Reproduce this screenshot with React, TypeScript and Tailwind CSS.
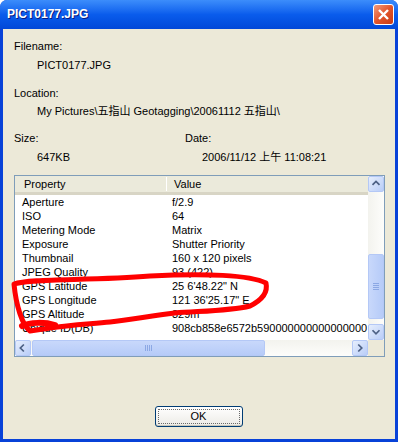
import React from 'react';

const rows: [string, string][] = [
  ['Aperture', 'f/2.9'],
  ['ISO', '64'],
  ['Metering Mode', 'Matrix'],
  ['Exposure', 'Shutter Priority'],
  ['Thumbnail', '160 x 120 pixels'],
  ['JPEG Quality', '93 (422)'],
  ['GPS Latitude', `25 6'48.22" N`],
  ['GPS Longitude', `121 36'25.17" E`],
  ['GPS Altitude', '329m'],
  ['Unique ID(DB)', '908cb858e6572b590000000000000000'],
];

const Arrow = ({ dir }: { dir: 'up' | 'down' | 'left' | 'right' }) => {
  const d = {
    up: 'M4 9 L8 5 L12 9',
    down: 'M4 6 L8 10 L12 6',
    left: 'M9 4 L5 8 L9 12',
    right: 'M6 4 L10 8 L6 12',
  }[dir];
  return (
    <svg width="16" height="16" viewBox="0 0 16 16">
      <path d={d} fill="none" stroke="#4D6185" strokeWidth="2" />
    </svg>
  );
};

const ScrollBtn = ({ dir }: { dir: 'up' | 'down' | 'left' | 'right' }) => (
  <div className="w-[16px] h-[16px] flex items-center justify-center rounded-[2px] border border-[#B4C8F6] bg-gradient-to-br from-[#E6EEFC] to-[#B9CDF8]">
    <Arrow dir={dir} />
  </div>
);

export default function App() {
  return (
    <div className="relative w-[398px] h-[442px] flex flex-col bg-[#0842D8] rounded-t-[7px] overflow-hidden font-['Liberation_Sans','Noto_Sans_CJK_TC',sans-serif] text-[11px] leading-[13px] text-black">
      {/* title bar */}
      <div className="h-[29px] shrink-0 flex items-center justify-between pl-[7px] pr-[4px] bg-gradient-to-b from-[#3C8DFB] via-[#0A5CEC] to-[#0248D8]">
        <span className="text-white font-bold text-[12px] [text-shadow:1px_1px_0_#0A1B80]">
          PICT0177.JPG
        </span>
        <div className="w-[21px] h-[21px] rounded-[3px] border border-white bg-gradient-to-br from-[#F09A7A] via-[#E2542A] to-[#C93A12] flex items-center justify-center">
          <svg width="13" height="13" viewBox="0 0 13 13">
            <path d="M2 2 L11 11 M11 2 L2 11" stroke="white" strokeWidth="2.4" />
          </svg>
        </div>
      </div>

      {/* body */}
      <div className="flex-1 mx-[3px] mb-[3px] bg-[#ECE9D8] flex flex-col pl-[11px] pr-[10px] pt-[11px]">
        <div>Filename:</div>
        <div className="mt-[6px] ml-[23px]">PICT0177.JPG</div>
        <div className="mt-[15px]">Location:</div>
        <div className="mt-[5px] ml-[23px]">My Pictures\五指山 Geotagging\20061112 五指山\</div>
        <div className="mt-[14px] flex">
          <div className="w-[171px]">
            <div>Size:</div>
            <div className="mt-[6px] ml-[23px]">647KB</div>
          </div>
          <div>
            <div>Date:</div>
            <div className="mt-[6px] ml-[17px]">2006/11/12 上午 11:08:21</div>
          </div>
        </div>

        {/* list view */}
        <div className="mt-[11px] h-[182px] border border-[#7F9DB9] bg-white flex flex-col">
          <div className="flex flex-1 min-h-0">
            <div className="flex-1 min-w-0 flex flex-col overflow-hidden">
              <div className="h-[19px] shrink-0 flex items-center bg-[#EBEADB] border-b-[3px] border-[#D8D5C5]">
                <div className="w-[151px] pl-[9px]">Property</div>
                <div className="w-[1px] h-[14px] bg-[#C7C5B2] border-r border-white" />
                <div className="pl-[7px]">Value</div>
              </div>
              <div className="flex-1 overflow-hidden">
                {rows.map(([k, v]) => (
                  <div key={k} className="h-[14px] flex items-center whitespace-nowrap">
                    <div className="w-[152px] shrink-0 pl-[7px]">{k}</div>
                    <div className="pl-[5px]">{v}</div>
                  </div>
                ))}
              </div>
            </div>
            {/* vertical scrollbar */}
            <div className="w-[16px] shrink-0 flex flex-col bg-gradient-to-r from-[#F3F3EE] to-[#FDFDFB]">
              <ScrollBtn dir="up" />
              <div className="flex-1 flex flex-col">
                <div className="h-[62px]" />
                <div className="h-[65px] rounded-[2px] border border-[#B4C8F6] bg-gradient-to-r from-[#C8D8FB] to-[#B6CBF8] flex flex-col items-center justify-center gap-[1px]">
                  <div className="w-[6px] h-[1px] bg-[#8CA8E4]" />
                  <div className="w-[6px] h-[1px] bg-[#8CA8E4]" />
                  <div className="w-[6px] h-[1px] bg-[#8CA8E4]" />
                  <div className="w-[6px] h-[1px] bg-[#8CA8E4]" />
                </div>
              </div>
              <ScrollBtn dir="down" />
            </div>
          </div>
          {/* horizontal scrollbar */}
          <div className="h-[16px] shrink-0 flex">
            <div className="flex-1 flex bg-gradient-to-b from-[#F3F3EE] to-[#FDFDFB]">
              <ScrollBtn dir="left" />
              <div className="w-[233px] ml-[1px] rounded-[2px] border border-[#B4C8F6] bg-gradient-to-b from-[#C8D8FB] to-[#B6CBF8] flex items-center justify-center gap-[1px]">
                <div className="w-[1px] h-[6px] bg-[#8CA8E4]" />
                <div className="w-[1px] h-[6px] bg-[#8CA8E4]" />
                <div className="w-[1px] h-[6px] bg-[#8CA8E4]" />
                <div className="w-[1px] h-[6px] bg-[#8CA8E4]" />
              </div>
              <div className="flex-1" />
              <ScrollBtn dir="right" />
            </div>
            <div className="w-[16px] bg-[#ECE9D8]" />
          </div>
        </div>

        <div className="mt-[49px] flex justify-center pr-[2px]">
          <button className="w-[88px] h-[21px] rounded-[3px] border border-[#003C74] bg-gradient-to-b from-[#FFFFFF] to-[#ECEBE6] p-[2px] shadow-[inset_0_-1px_0_#C9C7BA]">
            <div className="w-full h-full border border-dotted border-[#6B6B6B] flex items-center justify-center">
              OK
            </div>
          </button>
        </div>
      </div>

      {/* red annotation */}
      <svg className="absolute left-0 top-0 pointer-events-none" width="398" height="442" viewBox="0 0 398 442">
        <path
          d="M14 284 C 30 278, 90 281, 150 276 C 205 273, 250 275, 266 283 C 268 292, 262 300, 250 306 C 230 311, 200 311, 175 313 C 150 316, 130 320, 110 322 C 90 324, 70 325, 50 328 L 30 331 C 22 325, 16 305, 14 284 Z"
          fill="none"
          stroke="#FF0000"
          strokeWidth="5"
          strokeLinejoin="round"
        />
        <path d="M22 326 C 30 322, 45 322, 55 325" fill="none" stroke="#FF0000" strokeWidth="6" strokeLinecap="round" />
      </svg>
    </div>
  );
}
